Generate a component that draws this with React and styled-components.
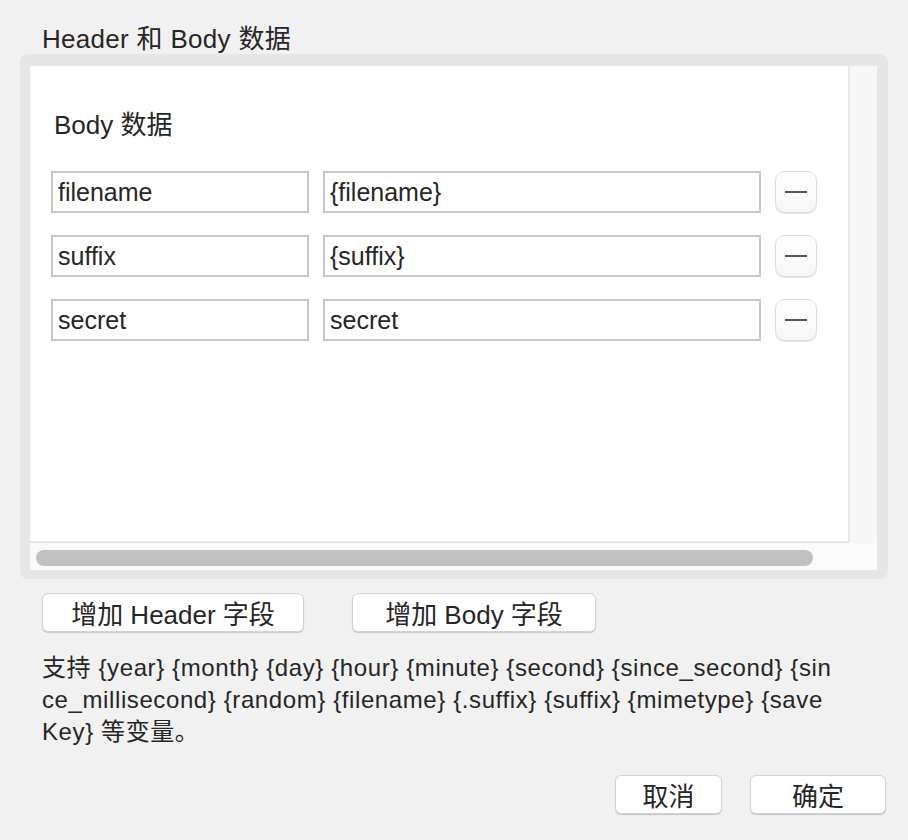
import styled, { createGlobalStyle } from "styled-components";

const rows = [
    { key: "filename", value: "{filename}" },
    { key: "suffix", value: "{suffix}" },
    { key: "secret", value: "secret" },
];

const ajuda = "支持 {year} {month} {day} {hour} {minute} {second} {since_second} {since_millisecond} {random} {filename} {.suffix} {suffix} {mimetype} {saveKey} 等变量。";

export default function App() {
    return (
        <>
            <Global />
            <Janela>
                <Titulo>Header 和 Body 数据</Titulo>
                <Grupo>
                    <Rolagem>
                        <Visao>
                            <Conteudo>
                                <SubTitulo>Body 数据</SubTitulo>
                                <Linhas>
                                    {rows.map((r, i) => (
                                        <Linha key={i}>
                                            <Campo $w={258} defaultValue={r.key} />
                                            <Campo $w={438} defaultValue={r.value} />
                                            <Remover aria-label="remover">
                                                <span />
                                            </Remover>
                                        </Linha>
                                    ))}
                                </Linhas>
                            </Conteudo>
                            <TrilhaVertical />
                        </Visao>
                        <TrilhaHorizontal>
                            <Polegar />
                        </TrilhaHorizontal>
                    </Rolagem>
                </Grupo>
                <Acoes>
                    <Botao $w={262}>增加 Header 字段</Botao>
                    <Botao $w={244}>增加 Body 字段</Botao>
                </Acoes>
                <Ajuda>{ajuda}</Ajuda>
                <Rodape>
                    <Botao $w={107}>取消</Botao>
                    <Botao $w={136}>确定</Botao>
                </Rodape>
            </Janela>
        </>
    )
}

const Global = createGlobalStyle`
    body {
        margin: 0;
        background: #f1f1f1;
        font-family: "Liberation Sans", "Noto Sans CJK SC", sans-serif;
        color: #262626;
    }
`
const Janela = styled.div`
    width: 908px;
    height: 840px;
    box-sizing: border-box;
    padding-top: 24px;
    display: flex;
    flex-direction: column;
    background: #f1f1f1;
`
const Titulo = styled.div`
    font-size: 26px;
    line-height: 30px;
    margin-left: 42px;
    letter-spacing: 0.3px;
`
const Grupo = styled.div`
    margin: 0 20px;
    background: #e6e6e6;
    border-radius: 8px;
    padding: 12px 11px 9px 10px;
`
const Rolagem = styled.div`
    background: #fafafa;
    display: flex;
    flex-direction: column;
`
const Visao = styled.div`
    display: flex;
    height: 477px;
`
const Conteudo = styled.div`
    flex: 1;
    background: #ffffff;
    border-right: 2px solid #e8e8e8;
    border-bottom: 2px solid #e8e8e8;
    padding: 44px 0 0 21px;
`
const TrilhaVertical = styled.div`
    width: 27px;
    background: #f7f7f7;
`
const TrilhaHorizontal = styled.div`
    height: 27px;
    padding: 7px 0 0 6px;
    box-sizing: border-box;
`
const Polegar = styled.div`
    width: 777px;
    height: 16px;
    border-radius: 8px;
    background: #c1c1c1;
`
const SubTitulo = styled.div`
    font-size: 26px;
    line-height: 30px;
    margin-left: 3px;
    margin-bottom: 31px;
`
const Linhas = styled.div`
    display: flex;
    flex-direction: column;
    gap: 22px;
`
const Linha = styled.div`
    display: flex;
    align-items: center;
    gap: 14px;
`
const Campo = styled.input`
    width: ${p => p.$w}px;
    height: 42px;
    box-sizing: border-box;
    border: 2px solid #c6c6c6;
    background: #ffffff;
    padding: 0 0 0 5px;
    font-family: inherit;
    font-size: 25px;
    color: #262626;
    outline: none;
`
const Remover = styled.button`
    width: 42px;
    height: 42px;
    border-radius: 10px;
    border: 1px solid #dcdcdc;
    background: linear-gradient(#ffffff, #f6f6f6);
    box-shadow: 0 1px 1px rgba(0, 0, 0, 0.12);
    display: flex;
    align-items: center;
    justify-content: center;
    padding: 0;

    span {
        display: block;
        width: 22px;
        height: 2px;
        background: #555555;
    }
`
const Acoes = styled.div`
    display: flex;
    gap: 48px;
    margin: 14px 0 0 42px;
`
const Botao = styled.button`
    width: ${p => p.$w}px;
    height: 39px;
    box-sizing: border-box;
    border: 1px solid #d2d2d2;
    border-radius: 6px;
    background: #ffffff;
    box-shadow: 0 1px 1px rgba(0, 0, 0, 0.18);
    font-family: inherit;
    font-size: 26px;
    color: #262626;
    padding: 0;
`
const Ajuda = styled.div`
    margin: 20px 0 0 42px;
    width: 792px;
    font-size: 24px;
    line-height: 32px;
    letter-spacing: 0.6px;
    word-break: break-all;
`
const Rodape = styled.div`
    display: flex;
    justify-content: flex-end;
    gap: 28px;
    margin: 27px 22px 0 0;
`
